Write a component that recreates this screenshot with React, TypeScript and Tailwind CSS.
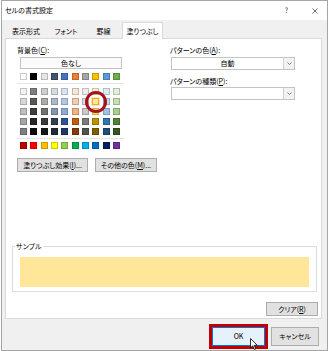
import React from 'react';

const themeColors = ['#ffffff', '#000000', '#e7e6e6', '#44546a', '#4472c4', '#ed7d31', '#a5a5a5', '#ffc000', '#5b9bd5', '#70ad47'];

const shadeRows = [
  ['#f2f2f2', '#7f7f7f', '#d0cece', '#d6dce4', '#d9e2f3', '#fbe5d5', '#ededed', '#fff2cc', '#deebf6', '#e2efd9'],
  ['#d8d8d8', '#595959', '#aeabab', '#adb9ca', '#b4c6e7', '#f7cbac', '#dbdbdb', '#fee599', '#bdd7ee', '#c5e0b3'],
  ['#bfbfbf', '#3f3f3f', '#757070', '#8496b0', '#8eaadb', '#f4b183', '#c9c9c9', '#ffd965', '#9cc3e5', '#a8d08d'],
  ['#a5a5a5', '#262626', '#3a3838', '#323f4f', '#2f5496', '#c55a11', '#7b7b7b', '#bf9000', '#2e75b5', '#538135'],
  ['#7f7f7f', '#0c0c0c', '#171616', '#222a35', '#1f3864', '#833c0b', '#525252', '#7f6000', '#1e4e79', '#375623'],
];

const standardColors = ['#c00000', '#ff0000', '#ffc000', '#ffff00', '#92d050', '#00b050', '#00b0f0', '#0070c0', '#002060', '#7030a0'];

const tabs = [
  { label: '表示形式', width: 'w-[42px]' },
  { label: 'フォント', width: 'w-[38px]' },
  { label: '罫線', width: 'w-[37px]' },
];

interface SwatchRowProps {
  colors: string[];
  selected?: number;
}

const SwatchRow: React.FC<SwatchRowProps> = ({ colors, selected }) => (
  <div className="ml-[3px] w-[100px] flex justify-between">
    {colors.map((c, i) =>
      i === selected ? (
        <div key={i} className="relative w-[7px] h-[7px]">
          <div
            className="w-[7px] h-[7px] border border-[#f0a63c] ring-1 ring-[#fbe3b5]"
            style={{ backgroundColor: c }}
          />
          <div className="absolute left-1/2 top-1/2 -translate-x-1/2 -translate-y-1/2 w-[22px] h-[22px] rounded-full border-[3px] border-[#a8101a]" />
        </div>
      ) : (
        <div key={i} className="w-[7px] h-[7px] border border-black/20" style={{ backgroundColor: c }} />
      )
    )}
  </div>
);

const Chevron = () => (
  <svg width="5" height="3" viewBox="0 0 5 3">
    <path d="M0.5 0.5 L2.5 2.5 L4.5 0.5" fill="none" stroke="#606060" strokeWidth="0.8" />
  </svg>
);

const Select: React.FC<{ value?: string; className?: string }> = ({ value, className }) => (
  <div className={`ml-[1px] w-[124px] h-[13px] border border-[#c4c4c4] bg-white flex ${className ?? ''}`}>
    <div className="flex-1 flex items-center justify-center">{value}</div>
    <div className="w-[11px] border-l border-[#d0d0d0] bg-[#f2f2f2] flex items-center justify-center">
      <Chevron />
    </div>
  </div>
);

const GreyButton: React.FC<{ className?: string; children: React.ReactNode }> = ({ className, children }) => (
  <div className={`bg-[#e1e1e1] border border-[#adadad] flex items-center justify-center ${className ?? ''}`}>
    {children}
  </div>
);

export default function App() {
  return (
    <div className="w-[330px] h-[351px] bg-white text-black text-[7px] leading-[9px] font-['Noto_Sans_CJK_JP',sans-serif] [font-feature-settings:'palt']">
      <div className="ml-[1px] w-[327px] h-[351px] border border-[#a6a6a6] bg-[#f0f0f0] flex flex-col">
        {/* title bar */}
        <div className="h-[19px] bg-white flex items-center pl-[3px] pr-[9px]">
          <span>セルの書式設定</span>
          <span className="ml-auto text-[#333]">?</span>
          <svg className="ml-[24px]" width="6" height="6" viewBox="0 0 6 6">
            <path d="M0.5 0.5 L5.5 5.5 M5.5 0.5 L0.5 5.5" stroke="#333" strokeWidth="0.7" />
          </svg>
        </div>

        {/* tabs */}
        <div className="h-[18px] flex items-end pl-[3px]">
          {tabs.map((t) => (
            <div key={t.label} className={`${t.width} h-[14px] flex items-center justify-center`}>
              {t.label}
            </div>
          ))}
          <div className="relative z-10 -mb-px w-[41px] h-[17px] bg-white border border-b-0 border-[#d9d9d9] flex items-center justify-center">
            塗りつぶし
          </div>
        </div>

        {/* panel */}
        <div className="ml-[3px] w-[317px] h-[281px] bg-white border border-[#d9d9d9] flex flex-col">
          <div className="flex">
            {/* background colour */}
            <div className="ml-[11px] w-[153px] flex flex-col">
              <div className="mt-[7px] h-[9px]">
                背景色(<u>C</u>):
              </div>
              <div className="mt-[2px] ml-[3px] w-[102px] h-[12px] border border-[#c2c2c2] bg-[#fbfbfb] flex items-center justify-center">
                色なし
              </div>
              <div className="mt-[4px]">
                <SwatchRow colors={themeColors} />
              </div>
              <div className="mt-[3px] w-[107px] h-px bg-[#e3e3e3]" />
              <div className="mt-[4px] flex flex-col gap-[3px]">
                {shadeRows.map((row, i) => (
                  <SwatchRow key={i} colors={row} selected={i === 1 ? 7 : undefined} />
                ))}
              </div>
              <div className="mt-[3px] w-[107px] h-px bg-[#e3e3e3]" />
              <div className="mt-[3px]">
                <SwatchRow colors={standardColors} />
              </div>
              <div className="mt-[9px] flex gap-[7px]">
                <GreyButton className="w-[71px] h-[14px]">
                  塗りつぶし効果(<u>I</u>)...
                </GreyButton>
                <GreyButton className="w-[62px] h-[14px]">
                  その他の色(<u>M</u>)...
                </GreyButton>
              </div>
            </div>

            {/* pattern */}
            <div className="flex flex-col w-[126px]">
              <div className="mt-[7px] h-[9px]">
                パターンの色(<u>A</u>):
              </div>
              <Select className="mt-[2px]" value="自動" />
              <div className="mt-[7px] h-[9px]">
                パターンの種類(<u>P</u>):
              </div>
              <Select className="mt-[1px]" />
            </div>
          </div>

          {/* sample */}
          <fieldset className="mt-[70px] ml-[6px] w-[305px] border border-[#dcdcdc]">
            <legend className="ml-[2px] px-[1px]">サンプル</legend>
            <div className="mx-[7px] mt-[6px] mb-[4px] h-[30px] bg-[#ffe699]" />
          </fieldset>

          <GreyButton className="mt-[10px] self-end mr-[3px] w-[52px] h-[14px]">
            クリア(<u>R</u>)
          </GreyButton>
        </div>

        {/* dialog buttons */}
        <div className="flex-1 flex items-start justify-end pt-[5px] pr-[8px]">
          <div className="relative w-[59px] h-[25px] border-[3px] border-[#c00000]">
            <div className="w-full h-full bg-[#e5f1fb] border border-[#0078d7] flex items-center justify-center">
              OK
            </div>
            <svg className="absolute left-[38px] top-[11px]" width="8" height="13" viewBox="0 0 8 13">
              <path d="M0.5 0.5 L0.5 10 L2.8 7.8 L4.4 11.5 L5.8 10.9 L4.3 7.3 L7.3 7.3 Z" fill="#fff" stroke="#000" strokeWidth="0.8" strokeLinejoin="round" />
            </svg>
          </div>
          <GreyButton className="ml-[3px] mt-[3px] w-[48px] h-[19px]">キャンセル</GreyButton>
        </div>
      </div>
    </div>
  );
}
